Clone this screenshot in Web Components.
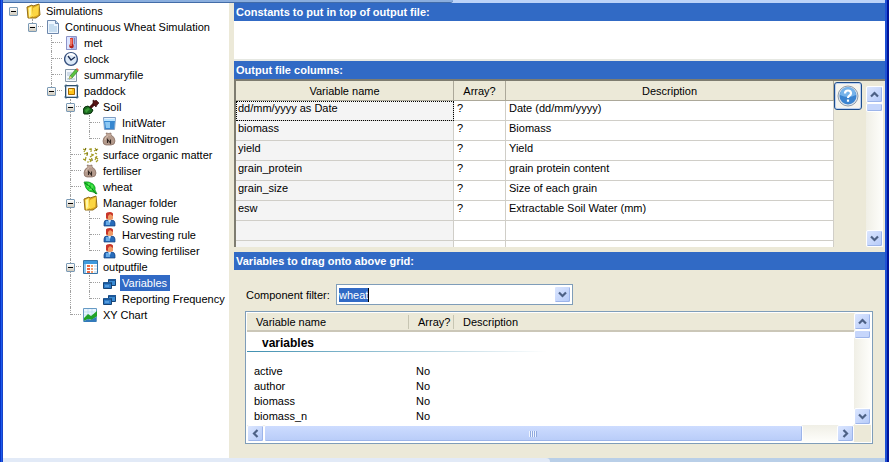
<!DOCTYPE html>
<html lang="en">
<head>
<meta charset="utf-8">
<title>Simulations</title>
<style>
html, body { margin: 0; height: 100%; }
body { font: 11px/16px "Liberation Sans", Arial, sans-serif; color: #000; background: #ece9d8; }
</style>
</head>
<body>
<sim-window>
  <sim-tree slot="tree"></sim-tree>
  <title-bar>Constants to put in top of output file:</title-bar>
  <constants-box></constants-box>
  <title-bar>Output file columns:</title-bar>
  <columns-grid></columns-grid>
  <title-bar>Variables to drag onto above grid:</title-bar>
  <component-filter></component-filter>
  <variable-list></variable-list>
</sim-window>

<script>
const ICONS = {
  folder: '<path d="M1 4l5-2 1 1 6-2 1 11-4 3H2z" fill="#d9a520" stroke="#94701a"/><path d="M2 5l4-2 1 10-4 2z" fill="#ffe45c"/><path d="M7 5l6-3-1 10-5 2z" fill="#fbd643"/><path d="M3 5l2-1v8l-2 2z" fill="#fff6a8"/>',
  page: '<path d="M2.500 1.500h8l3 3v10h-11z" fill="#edf6ff" stroke="#6e88ad"/><path d="M10.500 1.500v3h3" fill="#bcd6ee" stroke="#6e88ad"/><path d="M4 6h5M4 8h8M4 10h8M4 12h8" stroke="#9fc3e0"/>',
  met: '<path d="M2 2h10v13H2z" fill="#aeb8e8"/><path d="M3 2h4v13H3z" fill="#dde5ff"/><path d="M2.500 1.500h10v13h-10z" fill="none" stroke="#8c93c8"/><path d="M6 3h3v7H6z" fill="#e23d2e"/><circle cx="7.500" cy="11" r="2.300" fill="#b52018"/><path d="M7 4v7" stroke="#ffb4a0"/><path d="M10 4h1M10 6h1M10 8h1" stroke="#5a4a78"/>',
  clock: '<circle cx="7" cy="8" r="6.400" fill="#dce9f7" stroke="#35507e" stroke-width="1.400"/><path d="M3 5q4-4 8 0" stroke="#fff" stroke-width="2" fill="none"/><path d="M4 5l3 4 4-3" fill="none" stroke="#1d2f55" stroke-width="1.300"/>',
  summary: '<path d="M1.500 2.500h11v12h-11z" fill="#f5f8fc" stroke="#8596a6"/><path d="M3 6h5M3 8h4M3 12h8" stroke="#a9bfd3"/><path d="M5 12l1-3 6-7 2 2-6 7z" fill="#5bc440" stroke="#2c7c25" stroke-width=".7"/><path d="M12 2l1-1 2 2-1 1z" fill="#ee6546"/><path d="M5 12l1-3 2 2z" fill="#f4cf88"/>',
  paddock: '<path d="M1.500 2.500h12v12h-12z" fill="#fff" stroke="#24445f"/><path d="M2 1v15M13 1v15M0 3h15M0 14h15" stroke="#3c6687" stroke-width=".7"/><path d="M4.500 5.500h6v6h-6z" fill="#ffc31b" stroke="#a66900"/><path d="M5 6h3v2H5z" fill="#ffe169"/>',
  soil: '<path d="M6 10l6-6" stroke="#4a1010" stroke-width="3"/><path d="M10 1l2 1 1-1 3 3-2 2-1 2-3-3z" fill="#571414" stroke="#270909" stroke-width=".6"/><path d="M0 11q1-4 5-4l5 4q-1 4-5 4H1z" fill="#1c6b20" stroke="#082e0b"/><path d="M2 11l3-2 2 1-4 4" fill="#3a9c36"/>',
  water: '<path d="M1.500 2.500h12l-1 12h-10z" fill="#e4f3ff" stroke="#7d9cc2"/><path d="M2 6h11l-1 8H3z" fill="#3787d0"/><path d="M3 7h5v6H4z" fill="#8cc8f4"/><path d="M2 5h11" stroke="#b8e3ff" stroke-width="2"/>',
  bag: '<path d="M4 2q3 1 5 0v2q4 2 4 6 0 4-4 4H4q-3 0-3-4 0-4 4-6z" fill="#b39a8c" stroke="#84695c" stroke-width=".7"/><path d="M4 4h5" stroke="#d1b6a5"/><path d="M3 9q0-3 3-4" stroke="#d6c0b2" fill="none"/><path d="M5.500 12V8.500l3 3.500V8.500" fill="none" stroke="#302520" stroke-width="1.100"/>',
  matter: '<path d="M0 2l3 1M3 1l-2 4M6 2l3 1M8 1v4M12 1l2 3M15 2l-4 2M1 7l4-1M4 5v4M8 7l3 1M12 6l2 1M7 10l3-2M0 12l3 1M3 10l-1 4M6 12l3 2M9 11l-2 4M12 10l3 2M14 9l-2 4M4 15h2M13 15l2-2" stroke="#a29a22" stroke-width="1.200"/><path d="M2 2h1M13 3h1M9 13h1M4 7h1" stroke="#49490f"/>',
  leaf: '<path d="M1 3q5-1 9 2 3 3 2 6l2 4-4-2Q5 13 3 9 2 6 1 3z" fill="#25d832" stroke="#138b20" stroke-width=".7"/><path d="M2 4q6 3 11 11" fill="none" stroke="#087615"/><path d="M6 6V4M6 7l-2 1M9 9V6M9 10l-3 1" stroke="#8aee79" stroke-width=".8"/>',
  person: '<path d="M2 15v-3q0-3 3-3h4q4 0 4 3v3z" fill="#276cbb" stroke="#163f7c" stroke-width=".7"/><path d="M4 10h4v4H4z" fill="#69abe6"/><path d="M4 2h7v6q-3 2-7 0z" fill="#ef9a66"/><path d="M4 7V3q0-2 4-2 3 0 3 3v1L8 3 6 5v3z" fill="#c8352a"/><path d="M6 9h3l-1 3z" fill="#cde7ff"/>',
  output: '<path d="M.500 1.500h14v13H.500z" fill="#fff" stroke="#3673a6"/><path d="M1 2h13v3H1z" fill="#3f9ade"/><path d="M1 5h2v9H1z" fill="#91c9f1"/><path d="M4 6h3v2H4zM4 9h3v2H4zM4 12h3v2H4z" fill="#ec6843"/><path d="M8 6h2v2H8zM8 9h2v2H8zM8 12h2v2H8z" fill="#f2a070"/><path d="M11 6h3v2h-3zM11 9h3v2h-3zM11 12h3v2h-3z" fill="#d6e6f2"/>',
  variables: '<path d="M6.500 4.500h7v6h-7z" fill="#3b8cd4" stroke="#174476"/><path d="M7 4h7v2H7z" fill="#1d5798"/><path d="M1.500 7.500h8v6h-8z" fill="#2d7bc8" stroke="#174476"/><path d="M2 7h7v2H2z" fill="#1e5a9b"/><path d="M3 11h4" stroke="#80bdf0"/>',
  chart: '<path d="M.500 1.500h13v13H.500z" fill="#e9f5ff" stroke="#679ac4"/><path d="M1 5h12M1 8h12M5 2v10M9 2v10" stroke="#b8d8f0" stroke-width=".7"/><path d="M1 11l4-4 3 2 6-5v5l-5 4-4-1-4 2z" fill="#20a329"/><path d="M1 14l4-2 3 1 5-3v5H1z" fill="#337aba"/>'
};

const define = (name, html, setup) => customElements.define(name, class extends HTMLElement {
  constructor() {
    super();
    const t = document.createElement('template');
    t.innerHTML = html;
    this.attachShadow({ mode: 'open' }).append(t.content.cloneNode(true));
  }
  connectedCallback() { if (setup && !this.ready) { this.ready = true; setup(this, this.shadowRoot); } }
});

define('sim-window', `<style>
:host { display: grid; grid-template: 3px 1fr 4px / 3px 226px 1fr 4px; min-height: 100vh; }
.top { grid-area: 1 / 1 / 2 / 5; display: flex; background: #bcd3f8; }
.top i { width: 51%; background: #8aaede; border-bottom: 1px solid #426ca8; box-sizing: border-box; border-radius: 0 0 3px 0; }
.left { grid-area: 1 / 1 / 4 / 2; background: linear-gradient(90deg, #0732c5 33%, #1c5bec 33% 67%, #1742c8 67%); z-index: 1; }
.tree { grid-area: 2 / 2; background: #fff; min-width: 0; }
main { grid-area: 2 / 3; display: flex; flex-direction: column; background: #ece9d8; padding-left: 5px; min-width: 0; }
.right { grid-area: 1 / 4 / 4 / 5; background: linear-gradient(90deg, #1e50d4 50%, #00159a 50%); }
.bottom { grid-area: 3 / 2 / 4 / 4; display: flex; background: #b9cfe8; }
.bottom i { width: 62%; background: #e2eaf7; border-radius: 0 4px 0 0; }
</style><div class="top"><i></i></div><div class="left"></div><div class="tree"><slot name="tree"></slot></div>
<main><slot></slot></main><div class="right"></div><div class="bottom"><i></i></div>`);

define('title-bar', `<style>
:host { display: block; background: #316ac5; }
h2 { margin: 0; padding: 0 2px; font: bold 11px/18px "Liberation Sans", Arial, sans-serif; color: #fff; }
</style><h2><slot></slot></h2>`);

define('constants-box', `<style>
:host { display: block; }
textarea { display: block; box-sizing: border-box; width: 100%; height: 40px; border: 0; border-bottom: 2px solid #e6e8e2; padding: 2px; margin: 0; resize: none; outline: 0; background: #fff; font: inherit; }
</style><textarea aria-label="Constants"></textarea>`);

define('tree-item', `<style>
:host { display: flex; height: 16px; align-items: stretch; white-space: nowrap; }
.g { width: 19px; flex: none; display: grid; grid-template: 8px 8px / 9px 10px; }
.t b, .l b { border-bottom: 1px dotted #a0a0a0; grid-area: 1 / 2; }
.v u, .t u { border-right: 1px dotted #a0a0a0; grid-area: 1 / 1 / 3 / 2; }
.l u { border-right: 1px dotted #a0a0a0; grid-area: 1 / 1; }
button { grid-area: 1 / 1 / 3 / 3; z-index: 1; align-self: center; margin: 0 0 0 4px; box-sizing: border-box; width: 9px; height: 9px; padding: 0 1px; border: 1px solid #7b9ab5; border-radius: 1px; background: linear-gradient(#fff, #cfcabd); display: flex; align-items: center; }
button i { height: 1px; flex: 1; background: #000; }
svg { width: 16px; height: 16px; flex: none; margin: 0 2px; }
span { padding: 0 2px; }
:host([selected]) span { background: #316ac5; color: #fff; padding-right: 3px; }
</style>`, (el, root) => {
  const guides = el.getAttribute('guides');
  const open = el.hasAttribute('open');
  const cells = [...guides].map((c, i) => `<div class="g ${c}"><u></u><b></b>${open && i === guides.length - 1 ? '<button aria-label="Collapse"><i></i></button>' : ''}</div>`).join('');
  root.innerHTML += `${cells}<svg viewBox="0 0 16 16" fill="none" aria-hidden="true">${ICONS[el.getAttribute('icon')]}</svg><span>${el.getAttribute('label')}</span>`;
});

define('sim-tree', `<style>:host { display: block; padding-left: 2px; }</style>`, (el, root) => {
  // guides: one letter per level; v = line passes, t = branch, l = last branch, o = none
  const rows = [
    ['o', 'folder', 'Simulations', 1], ['ol', 'page', 'Continuous Wheat Simulation', 1],
    ['oot', 'met', 'met'], ['oot', 'clock', 'clock'], ['oot', 'summary', 'summaryfile'],
    ['ool', 'paddock', 'paddock', 1], ['ooot', 'soil', 'Soil', 1],
    ['ooovt', 'water', 'InitWater'], ['ooovl', 'bag', 'InitNitrogen'],
    ['ooot', 'matter', 'surface organic matter'], ['ooot', 'bag', 'fertiliser'], ['ooot', 'leaf', 'wheat'],
    ['ooot', 'folder', 'Manager folder', 1], ['ooovt', 'person', 'Sowing rule'],
    ['ooovt', 'person', 'Harvesting rule'], ['ooovl', 'person', 'Sowing fertiliser'],
    ['ooot', 'output', 'outputfile', 1], ['ooovt', 'variables', 'Variables', 0, 1],
    ['ooovl', 'variables', 'Reporting Frequency'], ['oool', 'chart', 'XY Chart']
  ];
  root.innerHTML += rows.map(([g, icon, label, open, sel]) =>
    `<tree-item guides="${g}" icon="${icon}" label="${label}"${open ? ' open' : ''}${sel ? ' selected' : ''}></tree-item>`).join('');
});

define('arrow-button', `<style>
:host { display: block; width: 17px; height: 17px; flex: none; }
button { width: 100%; height: 100%; box-sizing: border-box; margin: 0; padding: 0; border: 1px solid #fff; border-radius: 2px; box-shadow: inset -1px -1px #9db5ea; background: linear-gradient(135deg, #dbe6ff, #b5caf8); display: flex; align-items: center; justify-content: center; }
svg { width: 9px; height: 9px; }
:host([dir-to="down"]) svg { transform: rotate(180deg); }
:host([dir-to="left"]) svg { transform: rotate(-90deg); }
:host([dir-to="right"]) svg { transform: rotate(90deg); }
</style><button><svg viewBox="0 0 9 9" fill="none" stroke="#4d6185" stroke-width="2.200"><path d="M1 6.500l3.500-3.500L8 6.500"/></svg></button>`,
(el, root) => root.querySelector('button').setAttribute('aria-label', el.getAttribute('dir-to')));

define('scroll-bar', `<style>
:host { display: flex; flex-direction: column; width: 17px; background: linear-gradient(90deg, #f0efe6, #fefefb); }
:host([horizontal]) { flex-direction: row; width: auto; height: 17px; background: linear-gradient(#f0efe6, #fefefb); }
.track { flex: 1; display: flex; flex-direction: column; }
:host([horizontal]) .track { flex-direction: row; }
.thumb { box-sizing: border-box; height: 9px; border: 1px solid #fff; border-radius: 2px; box-shadow: inset -1px -1px #9db5ea; background: #c6d6fb; display: flex; align-items: center; justify-content: center; }
:host([horizontal]) .thumb { width: 94%; height: auto; background: linear-gradient(#cddcff, #b8ccf8); }
.grip { display: none; width: 8px; height: 6px; background: repeating-linear-gradient(90deg, #eef4ff 0 1px, #8fa9df 1px 2px); }
:host([horizontal]) .grip { display: block; }
</style>`, (el, root) => {
  const h = el.hasAttribute('horizontal');
  root.innerHTML += `<arrow-button dir-to="${h ? 'left' : 'up'}"></arrow-button><div class="track"><div class="thumb"><div class="grip"></div></div></div><arrow-button dir-to="${h ? 'right' : 'down'}"></arrow-button>`;
});

define('help-button', `<style>
:host { display: block; width: 28px; height: 28px; }
button { width: 100%; height: 100%; box-sizing: border-box; padding: 0; border: 1px solid #1c4c8c; border-radius: 3px; background: #f5f4ee; box-shadow: inset 0 0 0 1px #bcd0f0; display: flex; align-items: center; justify-content: center; }
svg { width: 22px; height: 22px; }
</style><button aria-label="Help"><svg viewBox="0 0 22 22" fill="none"><circle cx="11" cy="11" r="10" fill="#dfe5ec" stroke="#8f9cab"/><circle cx="11" cy="11" r="8.500" fill="#3b84d0"/><path d="M3 10a8 8 0 0 1 16 0q-8 4-16 0z" fill="#76b3ea"/><path d="M8 8.500q0-3 3-3t3 2.700q0 1.500-1.700 2.500-1.300.8-1.300 2.300M11 14.500v2.200" stroke="#fff" stroke-width="2.200"/></svg></button>`);

define('columns-grid', `<style>
:host { display: flex; box-sizing: border-box; border: solid #7e7c70; border-width: 2px 0 0 2px; margin-bottom: 5px; background: #ece9d8; }
table { flex: 1; min-width: 0; border-collapse: separate; border-spacing: 0; table-layout: fixed; }
col.n { width: 218px; } col.a { width: 52px; }
th { height: 18px; padding: 1px 2px 0; font-weight: normal; background: #ece9d8; border: solid #aca899; border-width: 0 1px 1px 0; text-align: center; }
td { height: 17px; padding: 0 3px 2px; background: #fff; border: solid #d0cec8; border-width: 0 1px 1px 0; vertical-align: top; line-height: 14px; }
td:first-child { background: #f4f4f4; padding-left: 2px; }
td.focus { outline: 1px dotted #000; outline-offset: -1px; }
tr.cut td { height: 6px; padding: 0; border-bottom: 0; line-height: 6px; }
aside { width: 49px; display: flex; justify-content: space-between; padding-top: 1px; padding-right: 2px; }
scroll-bar { margin-top: 4px; }
</style>
<table><colgroup><col class="n"><col class="a"><col></colgroup><thead><tr><th>Variable name</th><th>Array?</th><th>Description</th></tr></thead><tbody></tbody></table>
<aside><help-button></help-button><scroll-bar></scroll-bar></aside>`, (el, root) => {
  const rows = [['dd/mm/yyyy as Date', '?', 'Date (dd/mm/yyyy)'], ['biomass', '?', 'Biomass'], ['yield', '?', 'Yield'],
    ['grain_protein', '?', 'grain protein content'], ['grain_size', '?', 'Size of each grain'], ['esw', '?', 'Extractable Soil Water (mm)'], ['', '', ''], ['', '', '']];
  root.querySelector('tbody').innerHTML = rows.map((r, i) =>
    `<tr${i === 7 ? ' class="cut"' : ''}>${r.map((c, j) => `<td${i + j === 0 ? ' class="focus"' : ''}>${c}</td>`).join('')}</tr>`).join('');
});

define('component-filter', `<style>
:host { display: flex; align-items: center; margin: 14px 16px 6px 12px; }
label { width: 90px; }
.box { display: flex; align-items: center; box-sizing: border-box; width: 237px; height: 21px; border: 1px solid #7f9db9; background: #fff; padding: 1px 1px 1px 2px; }
select { appearance: none; field-sizing: content; border: 0; border-right: 1px solid #000; border-radius: 0; margin: 0; padding: 0; height: 14px; font: 11px/14px "Liberation Sans", Arial, sans-serif; background: #316ac5; color: #fff; outline: 0; }
arrow-button { margin-left: auto; }
</style><label for="filter">Component filter:</label><div class="box"><select id="filter"><option>wheat</option></select><arrow-button dir-to="down"></arrow-button></div>`,
(el, root) => root.querySelector('arrow-button').addEventListener('click', () => root.querySelector('select').showPicker()));

define('variable-list', `<style>
:host { display: grid; grid-template: 112px 17px / 1fr 17px; margin: 0 12px 14px 11px; border: 1px solid #7f9db9; padding: 1px; background: #fff; }
table { width: 100%; border-spacing: 0; table-layout: fixed; }
col.n { width: 162px; } col.a { width: 45px; }
th { font-weight: normal; text-align: left; background: #ece9d8; border-bottom: 2px solid #cbc7b8; padding: 0; height: 17px; }
th div { border-right: 1px solid #c7c5b2; padding-left: 9px; line-height: 14px; }
th:last-child div { border-right: 0; }
td { padding: 0 7px; line-height: 15px; }
.group th { background: #fff; border: 0; height: 17px; padding: 3px 0 12px; font-weight: bold; font-size: 12px; line-height: 16px; }
.group span { display: block; padding-left: 15px; }
.group hr { margin: 0; border: 0; height: 1px; width: 300px; background: linear-gradient(90deg, #3f8fb0, #fff); }
i { background: #ece9d8; }
.view { overflow: hidden; }
</style>
<div class="view"><table><colgroup><col class="n"><col class="a"><col></colgroup>
<thead><tr><th><div>Variable name</div></th><th><div>Array?</div></th><th><div>Description</div></th></tr></thead>
<tbody><tr class="group"><th colspan="3"><span>variables</span><hr></th></tr>
<tr><td>active</td><td>No</td><td></td></tr><tr><td>author</td><td>No</td><td></td></tr>
<tr><td>biomass</td><td>No</td><td></td></tr><tr><td>biomass_n</td><td>No</td><td></td></tr></tbody></table></div>
<scroll-bar></scroll-bar><scroll-bar horizontal></scroll-bar><i></i>`);
</script>
</body>
</html>
